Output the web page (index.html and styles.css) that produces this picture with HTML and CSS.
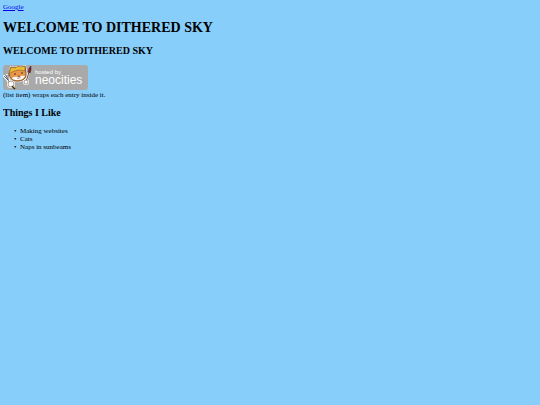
FILE: index.html
```html
<!DOCTYPE html>
<html lang="en">
<head>
    <meta charset="UTF-8">
    <meta name="viewport" content="width=device-width, initial-scale=1.0">
    <title>Dithered Sky</title>
    <link rel="stylesheet" href="styles.css">
</head>
<body>
    <a href="https://www.google.com">Google</a>
    <h1>WELCOME TO DITHERED SKY</h1>
    <h2>WELCOME TO DITHERED SKY</h2>

    <a class="badge" href="https://neocities.org">
        <svg viewBox="0 0 85 25" role="img" aria-label="hosted by neocities">
            <rect width="85" height="25" rx="3" fill="#a9a9a9"/>
            <!-- white sticker edge -->
            <g fill="#fff" stroke="#fff" stroke-width="2" stroke-linejoin="round" stroke-linecap="round">
                <path d="M7 8 L8 2 L12 3 Q15 1 18 3 L22 1 L23 8 Q24 14 17 16 Q9 17 7 12 Z"/>
                <path d="M1 11 L7 18 M4 10 L7 18 M23 17 L27 3" fill="none"/>
                <circle cx="8" cy="19" r="3"/>
                <circle cx="23" cy="17" r="2"/>
            </g>
            <!-- cat -->
            <path d="M6 9 L8 2 L12 3 Q15 1 18 3 L22 1 L23 8 Q24 14 17 16 Q9 17 7 12 Z" fill="#e9964a" stroke="#5b3a20" stroke-width=".8"/>
            <path d="M6 9 L8 2 L12 3 Q15 0 18 2 L22 1 L22 6 Q14 3 6 9 Z" fill="#f1bd35" stroke="#8a5c20" stroke-width=".6"/>
            <path d="M9 13 Q12 11 15 12 Q19 10 22 11 Q20 15 15 15 Q10 15 9 13 Z" fill="#fff"/>
            <circle cx="12" cy="9" r=".8" fill="#33251c"/>
            <circle cx="19" cy="8" r=".8" fill="#33251c"/>
            <path d="M15 11 H17 L16 12 Z M14 13 Q16 14 18 12" fill="none" stroke="#7b3c25" stroke-width=".6"/>
            <!-- fork and brush -->
            <path d="M1 11 L5 15 M3 10 L5 15 M5 10 L5 15 L8 19" fill="none" stroke="#555f66" stroke-width=".9"/>
            <path d="M23 17 L26 7" fill="none" stroke="#6b452f" stroke-width="1"/>
            <path d="M25 7 L26 3 L28 1 L28 5 L27 8 Z" fill="#8b1d29" stroke="#33251c" stroke-width=".5"/>
            <circle cx="8" cy="19" r="3" fill="#fff" stroke="#5b3a20" stroke-width=".5"/>
            <circle cx="23" cy="17" r="2" fill="#fff" stroke="#5b3a20" stroke-width=".5"/>
            <path d="M9 21 L12 24" fill="none" stroke="#33251c" stroke-width="1.5"/>
            <path d="M10 21 L12 23" fill="none" stroke="#f1bd35" stroke-width=".6"/>
            <text class="badge-small" x="32" y="9">hosted by</text>
            <text class="badge-name" x="32" y="19">neocities</text>
        </svg>
    </a>
    <p>(list item) wraps each entry inside it.</p>

    <h2>Things I Like</h2>
    <ul>
        <li>Making websites</li>
        <li>Cats</li>
        <li>Naps in sunbeams</li>
    </ul>
</body>
</html>
```
FILE: styles.css
```css
body {
    background-color: #87cefa;
    margin: 3px;
    font-family: "Liberation Serif", "Times New Roman", serif;
    font-size: 7px;
    line-height: 8px;
    color: #000;
}
a {
    display: table;
    color: #0000ee;
}
h1 {
    margin: 9px 0;
    font-size: 14px;
    line-height: 16px;
}
h2 {
    margin: 8px 0;
    font-size: 10px;
    line-height: 12px;
}
p {
    margin: 1px 0 0;
}
ul {
    margin: 8px 0;
    padding-left: 17px;
    list-style-type: "•\00a0\00a0";
}
.badge {
    display: block;
    width: 85px;
}
.badge svg {
    display: block;
    width: 100%;
}
.badge text {
    font-family: "Liberation Sans", Arial, sans-serif;
    fill: #fff;
}
.badge-small {
    font-size: 6px;
}
.badge-name {
    font-size: 12px;
}
```
